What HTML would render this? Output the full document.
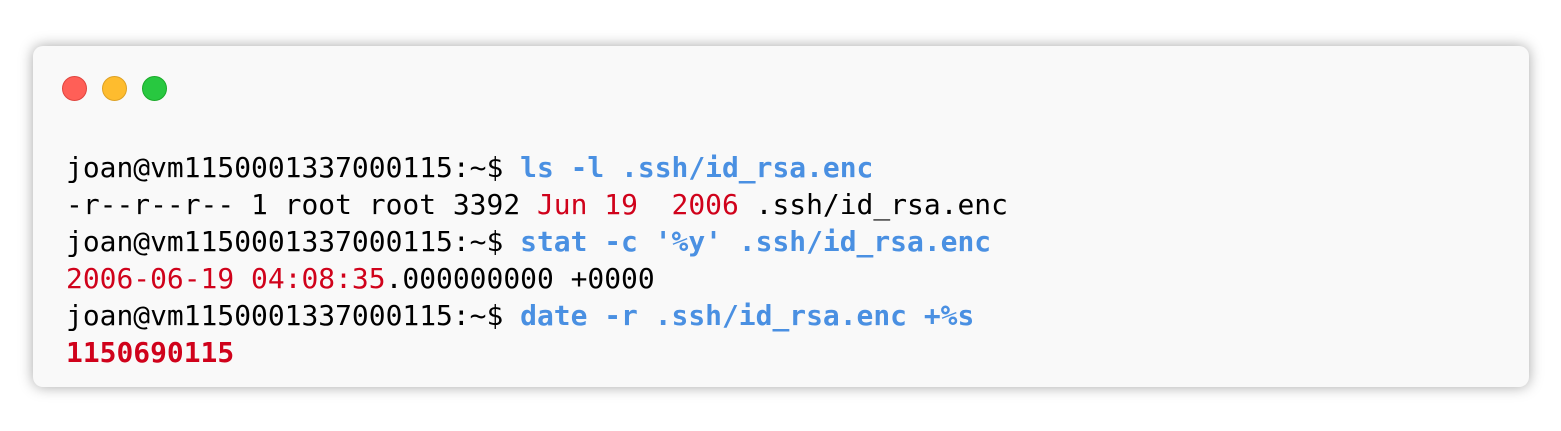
<!DOCTYPE html>
<html><head><meta charset="utf-8"><style>
html,body{margin:0;padding:0;background:#fff;width:1561px;height:431px;overflow:hidden}
.win{position:absolute;left:33px;top:46px;width:1496px;height:341px;background:#f9f9f9;border-radius:10px;box-shadow:0 0 14px rgba(0,0,0,0.35)}
.dot{position:absolute;top:30px;width:25px;height:25px;border-radius:50%}
pre{position:absolute;left:33px;top:103px;margin:0;font-family:"DejaVu Sans Mono","Liberation Mono",monospace;font-size:27.94px;line-height:37px;color:#000}
.c{color:#4a90e2;font-weight:bold}
.r{color:#d0021b}
.rb{color:#d0021b;font-weight:bold}
</style></head><body>
<div class="win">
<div class="dot" style="left:29px;background:#ff5f57;border:0.5px solid #e0443e;box-sizing:border-box"></div>
<div class="dot" style="left:69px;background:#febc2e;border:0.5px solid #dea123;box-sizing:border-box"></div>
<div class="dot" style="left:109px;background:#28c840;border:0.5px solid #1aab29;box-sizing:border-box"></div>
<pre>joan@vm1150001337000115:~$ <span class="c">ls -l .ssh/id_rsa.enc</span>
-r--r--r-- 1 root root 3392 <span class="r">Jun 19  2006</span> .ssh/id_rsa.enc
joan@vm1150001337000115:~$ <span class="c">stat -c '%y' .ssh/id_rsa.enc</span>
<span class="r">2006-06-19 04:08:35</span>.000000000 +0000
joan@vm1150001337000115:~$ <span class="c">date -r .ssh/id_rsa.enc +%s</span>
<span class="rb">1150690115</span></pre>
</div>
</body></html>
